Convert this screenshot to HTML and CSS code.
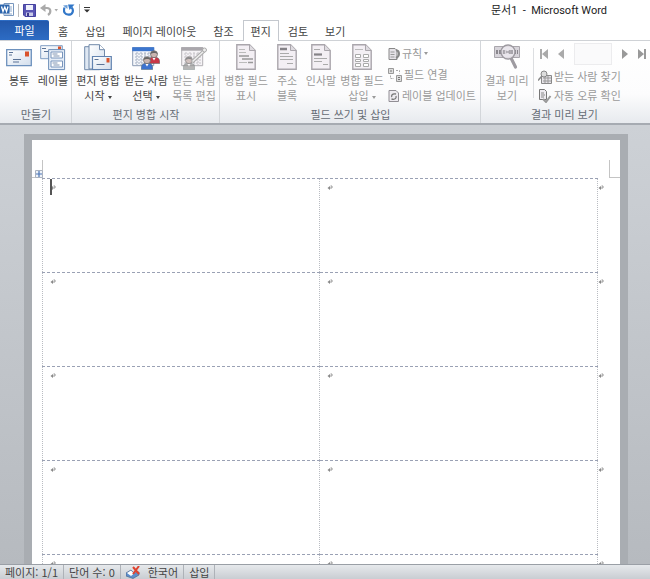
FILE: index.html
```html
<!DOCTYPE html>
<html lang="ko">
<head>
  <meta charset="UTF-8" />
  <meta name="viewport" content="width=device-width, initial-scale=1.0"/>
  <title>문서1 - Microsoft Word</title>
  <link rel="stylesheet" href="styles.css">
</head>
<body>
  <svg class="defs" aria-hidden="true">
    <defs>
      <linearGradient id="paper" x1="0" y1="0" x2="1" y2="1">
        <stop offset="0" stop-color="#fff"/><stop offset="1" stop-color="#d3deec"/>
      </linearGradient>
      <symbol id="mark" viewBox="0 0 6 6">
        <path d="M3.500 1h1.500v2h-3" fill="none" stroke="#999" stroke-width="1"/>
        <path d="M3 1v4L.5 3z" fill="#888"/>
      </symbol>
      <symbol id="doc" viewBox="0 0 20 26">
        <path d="M.8.8h12.7l5.7 5.7v18.7H.8z" fill="#f3eff4" stroke="#aaa6ac" stroke-width="1.4"/>
        <path d="M13.5.8v5.7h5.7" fill="#dedbe0" stroke="#aaa6ac"/>
      </symbol>
      <symbol id="person" viewBox="0 0 12 14">
        <path d="M.3 13.500c-.5-4.500 1.500-6.500 5.700-6.500s6.200 2 5.700 6.500z" fill="currentColor" stroke="#566" stroke-width=".5"/>
        <circle cx="6" cy="4.200" r="3.500" fill="#c9b5b0" stroke="#666" stroke-width=".7"/>
        <path d="M2.500 4C2 .5 9 -.5 9.700 4 8 3.300 6 2 2.500 4z" fill="#666"/>
        <path d="M4.500 8l1.500 2.500L7.500 8z" fill="#fff"/>
      </symbol>
    </defs>
  </svg>

  <!-- Title bar -->
  <header class="titlebar">
    <div class="quick">
      <button class="tool" aria-label="Word">
        <svg width="14" height="14" viewBox="0 0 14 14"><path d="M4 .5h9.500v12H4z" fill="#fff" stroke="#7897be"/><path d="M9 4h3M9 6h3M9 8h3M5 11h7" stroke="#8ea9cb"/><path d="M0 1.500h9.500v9H0z" fill="#2c65ad"/><path d="M1.500 3.500l1.500 5 1.800-4.500 1.700 4.500 1.500-5" fill="none" stroke="#fff" stroke-width="1.300"/></svg>
      </button>
      <span class="bar"></span>
      <button class="tool" aria-label="저장">
        <svg width="13" height="13" viewBox="0 0 13 13"><path d="M.5.5h12v12H2L.5 11z" fill="#5955b3" stroke="#4542a0"/><path d="M3 1h7v5H3z" fill="#eef0fb"/><path d="M3 8.500h7V12H3z" fill="#c9cbe8"/><path d="M4 9h2v3H4z" fill="#3d3a8c"/></svg>
      </button>
      <button class="tool" aria-label="실행 취소" disabled>
        <svg width="19" height="12" viewBox="0 0 19 12"><path d="M4 4h3c4 0 4.500 4.500 1 7" fill="none" stroke="#aaa" stroke-width="2.200"/><path d="M5.500 0v8L0 4z" fill="#aaa"/><path d="M14.500 5H18l-1.800 2.500z" fill="#aaa"/></svg>
      </button>
      <button class="tool" aria-label="다시 실행">
        <svg width="12" height="12" viewBox="0 0 12 12"><path d="M1.500 3.500C0 8 2 10.700 5.500 10.700 10 10.700 11 6 8.500 3.500" fill="none" stroke="#3277c8" stroke-width="2.200"/><path d="M5 .5h6.500L6.500 6z" fill="#3277c8"/><path d="M0 1.500l4.500-.5v4z" fill="#6b9fd9"/></svg>
      </button>
      <span class="bar"></span>
      <button class="tool" aria-label="빠른 실행 도구 모음 사용자 지정">
        <svg width="6" height="6" viewBox="0 0 6 6"><path d="M0 .5h6" stroke="#333"/><path d="M0 2.500h6L3 5.500z" fill="#333"/></svg>
      </button>
    </div>
    <h1 class="title">문서1&nbsp; -&nbsp; Microsoft Word</h1>
  </header>

  <!-- Tabs -->
  <nav class="tabs">
    <button class="tab file">파일</button>
    <button class="tab">홈</button>
    <button class="tab">삽입</button>
    <button class="tab">페이지 레이아웃</button>
    <button class="tab">참조</button>
    <button class="tab active">편지</button>
    <button class="tab">검토</button>
    <button class="tab">보기</button>
  </nav>

  <!-- Ribbon -->
  <div class="ribbon">
    <section class="group">
      <div class="items">
        <button class="big narrow">
          <svg width="26" height="28" viewBox="0 0 26 28"><path d="M.7 5.700h24.600v16H.7z" fill="url(#paper)" stroke="#6d91bd" stroke-width="1.300"/><path d="M3 8.500h4M3 11h3M7 15.500h8M7 18h6" stroke="#5b7396"/><path d="M19 7.500h4v5h-4z" fill="#d9532c"/></svg>
          <span>봉투</span>
        </button>
        <button class="big narrow">
          <svg width="26" height="28" viewBox="0 0 26 28"><path d="M.7 1.700h21.600v13H.7z" fill="url(#paper)" stroke="#7f9dc3"/><path d="M2 4.500h4M4 7.500h5" stroke="#5b7396"/><path d="M18 2.500h3v4h-3z" fill="#d9532c"/><path d="M8.600 5.600h16v20h-16z" fill="#e5edf7" stroke="#6f8fb8"/><path d="M11 8h11.500v6H11zM11 17h11.500v6H11z" fill="#fff" stroke="#7894bb"/><path d="M12.500 10h5M13.500 12h6M12.500 19h5M13.500 21h6" stroke="#7e93b1"/></svg>
          <span>레이블</span>
        </button>
      </div>
      <h2 class="caption">만들기</h2>
    </section>

    <section class="group">
      <div class="items">
        <button class="big">
          <svg width="28" height="28" viewBox="0 0 28 28"><path d="M.7 2.700h12l3 3v20H.7z" fill="#dfe8f3" stroke="#7189a9"/><path d="M5 .7h10.500l5 5V25H5z" fill="url(#paper)" stroke="#7189a9"/><path d="M15.500.7v5h5" fill="#fff" stroke="#7189a9"/><path d="M8.500 12.500h18.800v13H8.500z" fill="url(#paper)" stroke="#6283b0" stroke-width="1.200"/><path d="M10.500 15.500h4M12.500 20.500h8" stroke="#5b7396"/><path d="M22.500 14h3v4.500h-3z" fill="#d9532c"/></svg>
          <span>편지 병합<br>시작 <i class="caret"></i></span>
        </button>
        <button class="big">
          <svg width="28" height="28" viewBox="0 0 28 28"><path d="M.7 3.700h21v18h-21z" fill="#f5f7fb" stroke="#8b9bb3"/><path d="M.2 3.200h22v4H.2z" fill="#3c76ce"/><path d="M3 10h17M3 13h17M3 16h17M3 19h17M5 8v13M9 8v13M13 8v13M17 8v13" stroke="#a5b0c2" stroke-dasharray="2 1"/><use href="#person" x="16" y="6" width="12" height="14" color="#c83746"/><use href="#person" x="9" y="12" width="12" height="14" color="#3c73cf"/></svg>
          <span>받는 사람<br>선택 <i class="caret"></i></span>
        </button>
        <button class="big" disabled>
          <svg width="28" height="28" viewBox="0 0 28 28"><path d="M1.700 3.700h21v18h-21z" fill="#f5f3f6" stroke="#b2afb4"/><path d="M1.200 3.200h22v3.500h-22z" fill="#aaa7ac"/><path d="M4 10h17M4 13h17M4 16h17M4 19h17M6 8v13M10 8v13M14 8v13M18 8v13" stroke="#c5c2c7" stroke-dasharray="2 1"/><g opacity=".7"><use href="#person" x="3" y="12" width="12" height="14" color="#999"/></g><path d="M12 18L24 7" stroke="#aaa" stroke-width="3.600"/><path d="M12.500 17.500L24 7" stroke="#eee" stroke-width="1.600"/><circle cx="24.500" cy="6" r="2" fill="#eee" stroke="#aaa"/></svg>
          <span>받는 사람<br>목록 편집</span>
        </button>
      </div>
      <h2 class="caption">편지 병합 시작</h2>
    </section>

    <section class="group">
      <div class="items">
        <button class="big" disabled>
          <svg width="20" height="28" viewBox="0 0 20 28"><use href="#doc" width="20" height="26"/><path d="M3 5.500h6M3 8.500h7M3 18.500h8" stroke="#bbb"/><path d="M3 12h10M6 15h11M12 18.500h5" stroke="#999" stroke-width="1.500"/></svg>
          <span>병합 필드<br>표시</span>
        </button>
        <button class="big narrow" disabled>
          <svg width="20" height="28" viewBox="0 0 20 28"><use href="#doc" width="20" height="26"/><path d="M3 5h7" stroke="#858287" stroke-width="2.500"/><path d="M3 9.500h9M3 12.500h13M3 15.500h13M10 19.500h6" stroke="#aaa"/></svg>
          <span>주소<br>블록</span>
        </button>
        <button class="big narrow" disabled>
          <svg width="20" height="28" viewBox="0 0 20 28"><use href="#doc" width="20" height="26"/><path d="M3 5.500h6M3 14.500h13M3 17.500h8M12 20.500h5" stroke="#aaa"/><path d="M3 10.500h8" stroke="#858287" stroke-width="2.200"/></svg>
          <span>인사말</span>
        </button>
        <button class="big" disabled>
          <svg width="20" height="28" viewBox="0 0 20 28"><use href="#doc" width="20" height="26"/><path d="M3 5.500h8" stroke="#bbb"/><path d="M3.500 10.500h5v3h-5zM11.500 10.500h5v3h-5zM3.500 15.500h5v2h-5zM11.500 15.500h5v2h-5zM3.500 19.500h5v3h-5zM11.500 19.500h5v3h-5z" fill="#fff" stroke="#aaa"/></svg>
          <span>병합 필드<br>삽입 <i class="caret"></i></span>
        </button>
        <div class="stack">
          <button class="small" disabled>
            <svg width="12" height="14" viewBox="0 0 12 14"><path d="M1 1.500h6l2 2v9H1z" fill="#e6e3e8" stroke="#888"/><path d="M2.500 5h4M2.500 7.500h4M2.500 10h4" stroke="#999"/><path d="M8 3c4 1 4 6 0 8" fill="none" stroke="#888" stroke-width="2"/></svg>
            규칙 <i class="caret"></i>
          </button>
          <button class="small" disabled>
            <svg width="14" height="14" viewBox="0 0 14 14"><path d="M.5.5h5v5h-5zM8.500 7.500h5v6h-5z" fill="#ddd" stroke="#999"/><path d="M10 9.500h2M10 11.500h2M2 3h2" stroke="#777"/><path d="M8 2.500h3.500v3M2.500 7.500v3H6" fill="none" stroke="#aaa" stroke-dasharray="2 1"/></svg>
            필드 연결
          </button>
          <button class="small" disabled>
            <svg width="12" height="14" viewBox="0 0 12 14"><path d="M1 1.500h7l2.500 2.500v8.500H1z" fill="#eeebf0" stroke="#918e94"/><path d="M8 5C4 4 3 7 4 8M3.500 10c4 1 5-1 4.500-3" fill="none" stroke="#777" stroke-width="1.300"/></svg>
            레이블 업데이트
          </button>
        </div>
      </div>
      <h2 class="caption">필드 쓰기 및 삽입</h2>
    </section>

    <section class="group last">
      <div class="items">
        <button class="big" disabled>
          <svg width="28" height="28" viewBox="0 0 28 28"><path d="M1.500 2.500h25v11h-25z" fill="#d7d4da" stroke="#a9a6ac"/><path d="M3 8h22" stroke="#8a878d" stroke-width="4" stroke-dasharray="2 1"/><path d="M18 14l4.500 9" stroke="#9e9ba1" stroke-width="3.200" stroke-linecap="round"/><circle cx="15" cy="8" r="7" fill="#eeeaf0" fill-opacity=".8" stroke="#9d9aa0" stroke-width="1.300"/><path d="M11 6v4M13 8h3M17 6v4M19 6v4" stroke="#88858b" stroke-width="1.200"/></svg>
          <span>결과 미리<br>보기</span>
        </button>
        <span class="split"></span>
        <div class="stack results">
          <div class="records">
            <button class="step" aria-label="첫 레코드" disabled><svg width="8" height="10" viewBox="0 0 8 10"><path d="M0 0h2v10H0zM8 0v10L2 5z" fill="#aaa"/></svg></button>
            <button class="step" aria-label="이전 레코드" disabled><svg width="8" height="10" viewBox="0 0 8 10"><path d="M7 0v10L1 5z" fill="#aaa"/></svg></button>
            <input class="number" type="text" aria-label="레코드" disabled>
            <button class="step" aria-label="다음 레코드" disabled><svg width="8" height="10" viewBox="0 0 8 10"><path d="M1 0v10l6-5z" fill="#999"/></svg></button>
            <button class="step" aria-label="마지막 레코드" disabled><svg width="8" height="10" viewBox="0 0 8 10"><path d="M6 0h2v10H6zM0 0v10l6-5z" fill="#999"/></svg></button>
          </div>
          <button class="small" disabled>
            <svg width="14" height="14" viewBox="0 0 14 14"><path d="M3.500 5.500h10v8h-10z" fill="#e6e3e8" stroke="#888"/><path d="M5 8h8M5 11h8M7 6v7M10 6v7" stroke="#999"/><circle cx="6" cy="4" r="3" fill="#ddd" stroke="#888"/><path d="M4 6L0 10.500" stroke="#888" stroke-width="1.500"/></svg>
            받는 사람 찾기
          </button>
          <button class="small" disabled>
            <svg width="14" height="14" viewBox="0 0 14 14"><path d="M1.500.5h5l2 2v8h-7z" fill="#eeebf0" stroke="#777"/><path d="M3 4h3M3 6h4M3 8h3" stroke="#888"/><path d="M5 10l3 3 4.500-6" fill="none" stroke="#999" stroke-width="2"/></svg>
            자동 오류 확인
          </button>
        </div>
      </div>
      <h2 class="caption">결과 미리 보기</h2>
    </section>
  </div>

  <!-- Document -->
  <main class="workspace">
    <div class="page">
      <div class="margins">
        <span class="corner left"></span>
        <span class="corner right"></span>
        <svg class="handle" width="8" height="8" viewBox="0 0 8 8"><path d="M.5.5h7v7h-7z" fill="#eef2f8" stroke="#aab2bf"/><path d="M4 1v6M1 4h6" stroke="#4a74b5" stroke-width="1.200"/></svg>
      </div>
      <table class="labels">
        <tr>
          <td><span class="cursor"></span><svg class="mark"><use href="#mark"/></svg></td>
          <td><svg class="mark"><use href="#mark"/></svg></td>
          <td class="end"><svg class="mark"><use href="#mark"/></svg></td>
        </tr>
        <tr>
          <td><svg class="mark"><use href="#mark"/></svg></td>
          <td><svg class="mark"><use href="#mark"/></svg></td>
          <td class="end"><svg class="mark"><use href="#mark"/></svg></td>
        </tr>
        <tr>
          <td><svg class="mark"><use href="#mark"/></svg></td>
          <td><svg class="mark"><use href="#mark"/></svg></td>
          <td class="end"><svg class="mark"><use href="#mark"/></svg></td>
        </tr>
        <tr>
          <td><svg class="mark"><use href="#mark"/></svg></td>
          <td><svg class="mark"><use href="#mark"/></svg></td>
          <td class="end"><svg class="mark"><use href="#mark"/></svg></td>
        </tr>
        <tr>
          <td><svg class="mark"><use href="#mark"/></svg></td>
          <td><svg class="mark"><use href="#mark"/></svg></td>
          <td class="end"><svg class="mark"><use href="#mark"/></svg></td>
        </tr>
      </table>
    </div>
  </main>

  <!-- Status bar -->
  <footer class="status">
    <button class="cell">페이지: 1/1</button>
    <button class="cell">단어 수: 0</button>
    <button class="cell proof" aria-label="언어 교정">
      <svg width="15" height="13" viewBox="0 0 15 13"><path d="M0 7l5-3 3 3 5-1v3l-6 3.500L0 10z" fill="#5d8fcb" stroke="#47658f" stroke-width=".7"/><path d="M1 7l4-2.500 3 3-3 2.500z" fill="#fff"/><path d="M7 1l6 7M13 0L7 8" stroke="#e04330" stroke-width="2"/></svg>
    </button>
    <button class="cell">한국어</button>
    <button class="cell">삽입</button>
  </footer>
</body>
</html>
```
FILE: styles.css
```css
* {
  box-sizing: border-box;
}

body {
  margin: 0;
  height: 100vh;
  display: flex;
  flex-direction: column;
  overflow: hidden;
  background-color: #fff;
  color: #444;
  font-family: "Noto Sans CJK KR", sans-serif;
  font-size: 11px;
  line-height: 15px;
}

button {
  margin: 0;
  padding: 0;
  border: none;
  background: none;
  color: inherit;
  font: inherit;
  white-space: nowrap;
}

button:disabled {
  color: #9a9a9a;
}

svg {
  display: block;
  flex: none;
}

.defs {
  position: absolute;
  width: 0;
  height: 0;
}

/* Title bar */
.titlebar {
  display: flex;
  justify-content: space-between;
  align-items: center;
  height: 20px;
  flex: none;
  padding-right: 43px;
}

.quick {
  display: flex;
  align-items: center;
  gap: 4px;
  height: 16px;
}

.quick .bar {
  width: 1px;
  height: 13px;
  background-color: #bbb;
}

.title {
  margin: 0;
  color: #222;
  font-family: Roboto, "Noto Sans CJK KR", sans-serif;
  font-size: 11px;
  font-weight: normal;
}

/* Tabs */
.tabs {
  display: flex;
  gap: 1px;
  height: 21px;
  flex: none;
  margin-bottom: -1px;
  position: relative;
}

.tab {
  padding: 0 7px;
  border: 1px solid transparent;
  border-bottom: none;
}

.tab.file {
  width: 49px;
  margin-bottom: 1px;
  background: linear-gradient(#2358ab, #2d6cc4);
  border-radius: 0 2px 0 0;
  color: #fff;
}

.tab.active {
  border-color: #c4c8ce;
  background-color: #fff;
}

/* Ribbon */
.ribbon {
  display: flex;
  height: 85px;
  flex: none;
  overflow: hidden;
  border-top: 1px solid #cfd2d6;
  border-bottom: 2px solid #a6abb2;
  background: linear-gradient(#fff, #fcfcfd 65%, #e7eaee);
}

.group {
  display: flex;
  flex-direction: column;
  flex: none;
  padding: 0 1px 0 2px;
  border-right: 1px solid #d3d6da;
}

.group.last {
  border-right: none;
}

.items {
  display: flex;
  flex: 1;
}

.caption {
  margin: 0;
  height: 16px;
  color: #666c75;
  font-size: 11px;
  font-weight: normal;
  text-align: center;
}

.big {
  display: flex;
  flex-direction: column;
  align-items: center;
  gap: 1px;
  width: 48px;
  padding-top: 3px;
}

.big.narrow {
  width: 34px;
}

.caret {
  display: inline-block;
  border: 2px solid transparent;
  border-top: 3px solid currentColor;
  border-bottom: none;
  vertical-align: middle;
}

.stack {
  display: flex;
  flex-direction: column;
  gap: 6px;
  padding: 5px 3px 0 2px;
}

.small {
  display: flex;
  align-items: center;
  gap: 2px;
  height: 15px;
}

.split {
  width: 1px;
  height: 50px;
  margin: 7px 2px 0;
  background-color: #dcdee1;
}

.results {
  gap: 4px;
  padding: 2px 0 0 2px;
}

.records {
  display: flex;
  align-items: center;
  gap: 9px;
  height: 22px;
  padding-left: 2px;
}

.number {
  width: 38px;
  height: 22px;
  margin: 0;
  border: 1px solid #ececee;
  background-color: #fafafb;
}

/* Document */
.workspace {
  flex: 1;
  min-height: 0;
  overflow: hidden;
  padding: 9px 22px 0 24px;
  background: linear-gradient(#cdd1d6, #b6babf);
}

.page {
  min-height: 800px;
  border: 8px solid #a9adb2;
  border-top-width: 6px;
  background-color: #fff;
}

.margins {
  display: flex;
  justify-content: space-between;
  align-items: flex-end;
  height: 38px;
  position: relative;
}

.corner {
  width: 11px;
  height: 18px;
  border-bottom: 1px solid #c4c4c4;
}

.corner.left {
  border-right: 1px solid #c4c4c4;
}

.corner.right {
  border-left: 1px solid #c4c4c4;
}

.handle {
  position: absolute;
  left: 3px;
  bottom: 0;
}

.labels {
  width: calc(100% - 10px);
  margin-left: 10px;
  table-layout: fixed;
  border-collapse: collapse;
}

.labels td {
  height: 94px;
  padding: 6px 7px;
  border: 1px dotted #b9bcc2;
  border-top: 1px dashed #9aa1b4;
  border-bottom: 1px dashed #9aa1b4;
  vertical-align: top;
  position: relative;
}

.labels .end {
  width: 23px;
  padding: 6px 0;
  border-width: 0 0 0 1px;
}

.mark {
  width: 6px;
  height: 6px;
}

.cursor {
  position: absolute;
  left: 7px;
  top: 0;
  width: 2px;
  height: 16px;
  background-color: #555;
}

/* Status bar */
.status {
  display: flex;
  flex: none;
  height: 15px;
  border-top: 1px solid #9a9fa6;
  background: linear-gradient(#e6e9ec, #c9cdd2);
  line-height: 14px;
}

.cell {
  padding: 0 5px;
  border-right: 1px solid #aeb2b8;
}

.cell.proof {
  padding-right: 2px;
  border-right: none;
}
```
